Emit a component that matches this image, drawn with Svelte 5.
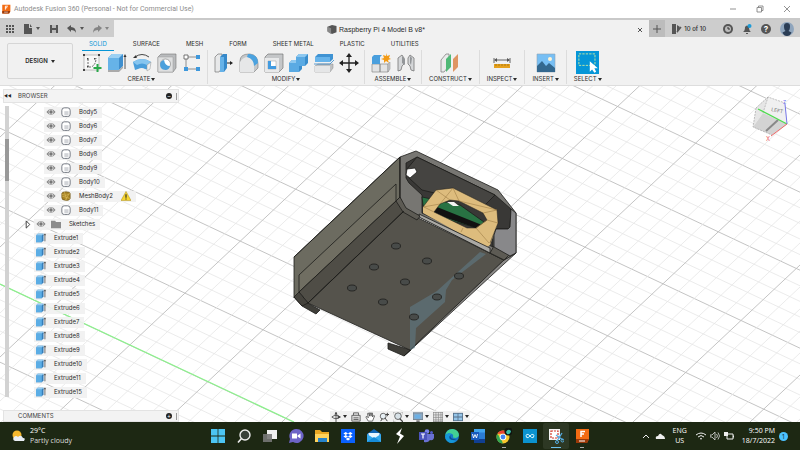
<script lang="ts">
	interface TreeRow {
		label: string;
		kind: 'body' | 'mesh' | 'folder' | 'extrude';
	}

	interface ToolGroup {
		name: string;
		tools: string[];
	}

	const ribbonTabs = ['SOLID', 'SURFACE', 'MESH', 'FORM', 'SHEET METAL', 'PLASTIC', 'UTILITIES'];

	const groups: ToolGroup[] = [
		{ name: 'CREATE', tools: ['sketch', 'extrude', 'revolve', 'hole', 'pattern'] },
		{ name: 'MODIFY', tools: ['presspull', 'fillet', 'shell', 'combine', 'split', 'move'] },
		{ name: 'ASSEMBLE', tools: ['component', 'joint'] },
		{ name: 'CONSTRUCT', tools: ['plane'] },
		{ name: 'INSPECT', tools: ['measure'] },
		{ name: 'INSERT', tools: ['image'] },
		{ name: 'SELECT', tools: ['select'] }
	];

	const rows: TreeRow[] = [
		...[5, 6, 7, 8, 9, 10].map((n) => ({ label: `Body${n}`, kind: 'body' as const })),
		{ label: 'MeshBody2', kind: 'mesh' },
		{ label: 'Body11', kind: 'body' },
		{ label: 'Sketches', kind: 'folder' },
		...[1, 2, 3, 4, 5, 6, 7, 8, 9, 10, 11, 15].map((n) => ({
			label: `Extrude${n}`,
			kind: 'extrude' as const
		}))
	];

	const navTools = [
		{ icon: 'orbit', menu: true },
		{ icon: 'lookat', menu: false },
		{ icon: 'pan', menu: false },
		{ icon: 'zoom', menu: false },
		{ icon: 'fit', menu: true },
		{ icon: 'display', menu: true },
		{ icon: 'grid', menu: true },
		{ icon: 'viewports', menu: true }
	];

	const apps = ['windows', 'search', 'taskview', 'chat', 'explorer', 'dropbox', 'mail', 'scratch', 'teams', 'edge', 'word', 'chrome', 'arduino', 'snip', 'fusion'];

	// 20x20 glyphs for the ribbon
	const toolIcons: Record<string, string> = {
		sketch: '<rect x="2" y="2" width="15" height="15" fill="#f8f8f8" stroke="#999" stroke-width=".6"/><g fill="#444"><path d="M1 1h2v2H1zM16 1h2v2h-2zM1 16h2v2H1zM5 5h1.500v1.500H5zM12 5h1.500v1.500H12zM5 13h1.500v1.500H5z"/></g><path d="M6 6v8h3q5-2 5-9" fill="none" stroke="#444" stroke-width=".8" stroke-dasharray="2 1"/><path d="M15.500 11v8M11.500 15h8" stroke="#2aa84a" stroke-width="2"/>',
		extrude: '<path d="M1 5l4-4h11v12l-4 4H1z" fill="#3f8fce"/><path d="M1 5l4-4h11l-4 4z" fill="#9bd0f3"/><path d="M1 5h11v12H1z" fill="#66b3e8"/><path d="M1 17h11l4-4v2l-4 4H1z" fill="#aaa"/><path d="M18 16V3" stroke="#333" stroke-width=".8"/><path d="M16.500 4L18 1l1.500 3z" fill="#333"/>',
		revolve: '<path d="M3 4q7-5 14 0" fill="none" stroke="#333" stroke-width=".9"/><path d="M1 5l3-3 .8 3z" fill="#333"/><path d="M1 9q9-6 18 0l-2 8-4-1q-3-2-7 0l-3 1z" fill="#4a9edb"/><path d="M1 9q9-6 18 0l-4 3q-5-3-10 0z" fill="#86c5ef"/><path d="M15 12l4-3-1 7-3 2z" fill="#f0f0f0" stroke="#999" stroke-width=".5"/>',
		hole: '<path d="M1 4l3-3h15v14l-3 4H1z" fill="#b9bbbd" stroke="#777" stroke-width=".6"/><path d="M1 4h15v15H1z" fill="#dedfe0" stroke="#999" stroke-width=".5"/><circle cx="8.500" cy="11" r="5" fill="#fff" stroke="#777" stroke-width=".6"/><path d="M7 7a5 5 0 1 0 6 6q-5 0-6-6z" fill="#4ba0dc"/>',
		pattern: '<path d="M6 4h9M4 6v9M6 16h9" fill="none" stroke="#777" stroke-width=".8"/><path d="M2 2h4v4H2z" fill="#fff" stroke="#555" stroke-width=".8"/><path d="M14 2h4v4h-4zM2 14h4v4H2zM14 14h4v4h-4z" fill="#3e98dc"/>',
		presspull: '<path d="M1 4l3-3h4v14l-3 4H1z" fill="#e7e8e9" stroke="#777" stroke-width=".7"/><path d="M6 4l3-3h4v14l-3 4H6z" fill="#3689ca"/><path d="M6 4h4v15H6z" fill="#66b2e8"/><path d="M13 10h4" stroke="#222" stroke-width="1"/><path d="M16 8l3 2-3 2z" fill="#222"/>',
		fillet: '<path d="M1 19V8q0-7 9-7h1q8 1 8 10v4l-4 4z" fill="#c5c7c9" stroke="#777" stroke-width=".6"/><path d="M1 19V9q3-5 8-5 5 1 6 8v7z" fill="#e6e7e8"/><path d="M9 1h2q8 1 8 9l-4 3q0-7-7-9z" fill="#4ba2df"/>',
		shell: '<path d="M1 4l3-3h15v14l-4 4H1z" fill="#c4c6c8" stroke="#777" stroke-width=".7"/><path d="M1 5h14v14H1z" fill="#e8e9ea"/><path d="M4 8h8v8H4z" fill="#fff" stroke="#999" stroke-width=".5"/><path d="M4 8h3v5h5v3H4z" fill="#429be0"/>',
		combine: '<path d="M0 10l3-3h4V4l3-3h9v9l-3 3h-3v3l-3 3H0z" fill="#398dcc"/><path d="M0 10l3-3h4V4l3-3h9l-3 3v6H8z" fill="#8dc8f0"/><path d="M0 10h7V4h9v9h-6v6H0z" fill="#5aaae3"/>',
		split: '<path d="M1 4l3-3h15v5l-3 3H1z" fill="#3f93d3"/><path d="M1 4h15v5H1z" fill="#67b4eb"/><path d="M1 13l3-2h15v4l-3 4H1z" fill="#bfc1c3" stroke="#888" stroke-width=".5"/><path d="M1 13h15v6H1z" fill="#e5e6e7"/><path d="M0 11h16l4-4" fill="none" stroke="#3689ca" stroke-width=".8"/>',
		move: '<path d="M10 3v14M3 10h14" stroke="#222" stroke-width="1.300"/><path d="M10 0l3 4H7zM10 20l3-4H7zM0 10l4-3v6zM20 10l-4-3v6z" fill="#222"/>',
		component: '<path d="M1 11h8v8H1zM9 11h8v8H9z" fill="#e2e3e4" stroke="#888" stroke-width=".7"/><path d="M17 11l2-2v7l-2 3z" fill="#c6c8ca" stroke="#888" stroke-width=".5"/><path d="M1 4l2-2h8l-2 2v7H1z" fill="#4a9fdd"/><path d="M15 0l1 3 3-1-1 3 2 1-3 1 1 3-3-2-2 2 0-3-3-1 3-1-1-3 3 1z" fill="#f39b16"/>',
		joint: '<path d="M2 5l4-3 2 3v6l-2 2-1 4-3 1zM18 5l-4-3-2 3v6l2 2 1 4 3 1z" fill="#d5d7d9" stroke="#777" stroke-width=".8"/><path d="M6 3l3 3v6l-3-2zM14 3l2 2-1 7-1-2z" fill="#939699"/>',
		plane: '<path d="M1 7l5-6h3v12l-5 6H1z" fill="#e9eaea" stroke="#777" stroke-width=".7"/><path d="M6 6l5-5v13l-5 5z" fill="#4fb976"/><path d="M13 6l5-5v13l-5 5z" fill="#df9562"/>',
		measure: '<path d="M2 5v5M18 5v5M3 7h14" stroke="#555" stroke-width=".9"/><path d="M2 7l3-2v4zM18 7l-3-2v4z" fill="#555"/><path d="M2 11h16v4H2z" fill="#e6a11d"/><path d="M4 11v2M7 11v2M10 11v2M13 11v2M16 11v2" stroke="#8a5f08" stroke-width=".6"/>',
		image: '<path d="M1 1h18v18H1z" fill="#77bff4" stroke="#90a6b7" stroke-width=".6"/><circle cx="14" cy="6" r="2" fill="#fff5d5"/><path d="M1 13l5-5 4 5 3-3 6 5v4H1z" fill="#33688f"/>',
		select: '<path d="M0 0h20v20H0z" fill="#0696d7"/><path d="M2.500 2.500h14v10h-14z" fill="none" stroke="#c9e89f" stroke-width=".8" stroke-dasharray="2 1"/><path d="M12 9v9l2-2 2 3 1.500-1-1.500-3h3z" fill="#fff"/>'
	};

	// 12x12 glyphs shared by the tree and the navigation bar
	const smallIcons: Record<string, string> = {
		eye: '<path d="M.500 6Q6-1 11.500 6 6 13 .500 6z" fill="#858585"/><circle cx="6" cy="6" r="3" fill="#ddd"/><circle cx="6" cy="6" r="2" fill="#777"/>',
		body: '<rect x="1" y="1" width="10" height="10.500" rx="3" fill="#fff" stroke="#5f6570" stroke-width="1"/><path d="M4 5h5v5H4z" fill="#d2d4d8"/>',
		mesh: '<path d="M1 3q0-2 5-2 5 0 5 2v6q-1 3-6 2-4 0-4-3z" fill="#a98527" stroke="#6d5518" stroke-width=".8"/><path d="M1 4q5 3 10-1M4 1l3 10M10 3L5 11M1 6l10 3" fill="none" stroke="#e3c566" stroke-width=".6"/>',
		folder: '<path d="M0 2h5l1 1.500h6V11H0z" fill="#8b8b8b"/>',
		extrude: '<path d="M0 3l2-2h7v8l-2 2H0z" fill="#337dba"/><path d="M0 3h7v8H0z" fill="#5bade5"/><path d="M0 3l2-2h7L7 3z" fill="#94cdf3"/><path d="M10.700 10V2M9.500 3l1.200-2L12 3" fill="none" stroke="#444" stroke-width=".9"/>',
		orbit: '<path d="M6 0v12M1 6q5-4 10 0M1 6q5 4 10 0" fill="none" stroke="#444" stroke-width="1"/><path d="M8 4l4 2-4 2zM4 3l2-3 2 3z" fill="#444"/>',
		lookat: '<path d="M1 4h10v7H1zM3 4V1h6v3M3 7h6M3 9h6" fill="#ddd" stroke="#555" stroke-width="1"/>',
		pan: '<path d="M4 11L1 6l1-1 2 2-1-5 1-1 1.500 4V1h1l.8 4L8 1l1 .3L9 6l1.500-2 1 .6L9 11z" fill="#fff" stroke="#444" stroke-width=".9"/>',
		zoom: '<circle cx="5" cy="5" r="3.500" fill="#e8f0f5" stroke="#555"/><path d="M2 11l2-3M7 7l3 4M10 1v4M8 3h4" stroke="#444" stroke-width="1.200"/>',
		fit: '<circle cx="6" cy="5" r="4" fill="#d8e2e8" stroke="#555"/><path d="M8 8l4 4" stroke="#444" stroke-width="1.500"/><path d="M0 3V0h3M9 0h3v3M0 9v3h3" fill="none" stroke="#999" stroke-width=".8"/>',
		display: '<path d="M0 1h12v8H0z" fill="#8ea8c0" stroke="#667788"/><path d="M2 3h7v5H2z" fill="#6cb0e5"/><path d="M4 10h4v2H4z" fill="#777"/>',
		grid: '<path d="M0 0h12v12H0z" fill="#e5e5e5"/><path d="M0 .500h12M0 3.500h12M0 6.500h12M0 9.500h12M.500 0v12M3.500 0v12M6.500 0v12M9.500 0v12M0 11.500h12M11.500 0v12" stroke="#888" stroke-width=".8"/>',
		viewports: '<path d="M0 1h12v10H0z" fill="#56708a"/><path d="M1 2h4.500v3.500H1zM6.500 2H11v3.500H6.500zM1 6.500h4.500V10H1zM6.500 6.500H11V10H6.500z" fill="#94c4e8"/>',
		warn: '<path d="M6 .500L12 11.500H0z" fill="#f7d530" stroke="#a98a13" stroke-width=".6"/><path d="M6 4v4M6 9v1.300" stroke="#222" stroke-width="1.300"/>'
	};

	// 16x16 glyphs for the taskbar
	const appIcons: Record<string, string> = {
		windows: '<path d="M1 1h6.600v6.600H1zM8.400 1H15v6.600H8.400zM1 8.400h6.600V15H1zM8.400 8.400H15V15H8.400z" fill="#4cc5f3"/>',
		search: '<circle cx="9" cy="7" r="5" fill="#39413a" stroke="#eee" stroke-width="1.400"/><path d="M5.500 10.500L2 14.500" stroke="#eee" stroke-width="1.700"/>',
		taskview: '<path d="M5 2h10v9H5z" fill="#f0f0f0"/><path d="M1 6h9v8H1z" fill="#777" opacity=".9"/>',
		chat: '<path d="M8 1a7 7 0 1 1-3 13l-4 1 1-4A7 7 0 0 1 8 1z" fill="#6d64c7"/><path d="M4 5.500h5v5H4zM9.500 7.500l3-2v5l-3-2z" fill="#fff"/>',
		explorer: '<path d="M1 2h5l2 2h7v10H1z" fill="#e8a723"/><path d="M1 6h14v8H1z" fill="#ffd35c"/><path d="M4 10h9v4H4z" fill="#2683cb"/>',
		dropbox: '<path d="M1 1h14v14H1z" fill="#0a61fe"/><path d="M5.700 4L8 5.500 5.700 7 3.400 5.500zM10.300 4l2.300 1.500L10.300 7 8 5.500zM5.700 7L8 8.500 5.700 10 3.400 8.500zM10.300 7l2.300 1.500-2.300 1.500L8 8.500zM8 9.500l2.300 1.500L8 12.500 5.700 11z" fill="#fff"/>',
		mail: '<path d="M1 6l7-5 7 5v8H1z" fill="#1266b5"/><path d="M2.500 5h11v6h-11z" fill="#e9f6ff"/><path d="M1 6l7 4.500L15 6v8H1z" fill="#36a9ec"/><path d="M1 14l7-5 7 5z" fill="#168bd8"/>',
		scratch: '<path d="M10 0L4 6l4 2.500L5 16l7-8-4-2.500z" fill="#fff"/>',
		teams: '<circle cx="9" cy="3.500" r="2.300" fill="#7b83eb"/><circle cx="13.500" cy="4.500" r="1.500" fill="#5059c9"/><path d="M6 6h10v4q-1 3-4 2-2 3-6 2z" fill="#6971d2"/><path d="M1 4h8v8H1z" fill="#4b53bc"/><path d="M3 6h4M5 6v4.500" stroke="#fff" stroke-width="1.200"/>',
		edge: '<circle cx="8" cy="8" r="7" fill="#1678c8"/><path d="M1.200 7Q3 .500 9 1q6 1 6 6.500Q13.500 11 9 9.500q1-4-3-4-3 0-4.800 1.500z" fill="#43cf94"/><path d="M1 8q3-5 6-2-4 5 5 7-5 4-9 0Q1 11 1 8z" fill="#1597d8"/><path d="M6.500 7q-1 4 6 4.500-5 1.500-7-1-1-2 1-3.500z" fill="#0d4d91"/>',
		word: '<path d="M4 1h11v14H4z" fill="#2b7cd3"/><path d="M4 1h11v3.500H4z" fill="#41a5ee"/><path d="M4 11h11v4H4z" fill="#103f91"/><path d="M1 4h8v8H1z" fill="#185abd"/><path d="M2.500 6l1 4L5 6.500 6.500 10l1-4" fill="none" stroke="#fff" stroke-width=".9"/>',
		chrome: '<circle cx="7" cy="9" r="6.500" fill="#f8c72c"/><path d="M1.400 5.700a6.500 6.500 0 0 1 11.200 0H7z" fill="#e94235"/><path d="M1.400 5.700L5 11l2 4.500A6.500 6.500 0 0 1 1.400 5.700z" fill="#34a853"/><circle cx="7" cy="9" r="3.300" fill="#fff"/><circle cx="7" cy="9" r="2.400" fill="#4285f4"/><circle cx="12.500" cy="3.500" r="4" fill="#101510"/><path d="M10 4q2-4 5-1-1 4-4 3z" fill="#38bda5"/>',
		arduino: '<path d="M1 1h14v14H1z" fill="#0b93cf"/><path d="M8 8Q6 5.500 4.700 6.500t0 3Q6 10.500 8 8q2-2.500 3.300-1.500t0 3Q10 10.500 8 8z" fill="none" stroke="#d8f6ff" stroke-width="1"/>',
		snip: '<path d="M1 1h11v11H1z" fill="#f4f4f4"/><path d="M3 3h7v7H3z" fill="#fff" stroke="#d33b2c" stroke-width="1.200" stroke-dasharray="2 1"/><path d="M8 7l7 5M14 5l-5 8" stroke="#55ade2" stroke-width="1.300"/><circle cx="9" cy="14" r="1.500" fill="none" stroke="#55ade2"/><circle cx="14.500" cy="12.500" r="1.500" fill="none" stroke="#55ade2"/>',
		fusion: '<path d="M2 1h13v10l-2 4H2z" fill="#f36b12"/><path d="M2 11h13l-2 4H2z" fill="#9b3908"/><path d="M7 9V3.500h4M7 6h3" fill="none" stroke="#fff" stroke-width="1.500"/><path d="M5 13h6" stroke="#fff" stroke-width="1"/>'
	};

	// ground grid, every fifth line is a major one
	const down = Array.from({ length: 50 }, (_, i) => ({
		y: 409 - i * 15.6,
		major: (i - 3) % 5 === 0
	}));
	const up = Array.from({ length: 50 }, (_, i) => ({
		y: 137 + i * 22,
		major: i % 5 === 0
	}));

	const screwHoles = [
		[396, 246], [427, 261], [374, 267], [405, 282], [459, 276],
		[352, 288], [383, 302], [437, 297], [414, 317]
	];

	let activeTab = $state('SOLID');
	let hidden = $state<Record<string, boolean>>({});
</script>

<div class="app">
	<header class="titlebar">
		<svg class="logo" viewBox="0 0 16 16" aria-hidden="true">{@html appIcons.fusion}</svg>
		<h1>Autodesk Fusion 360 (Personal - Not for Commercial Use)</h1>
		<button aria-label="Minimize"><svg viewBox="0 0 8 8"><path d="M1 4h6" /></svg></button>
		<button aria-label="Restore"><svg viewBox="0 0 8 8"><path d="M1 2.500h4.500V7H1zM2.500 2.500V1H7v4.500H5.500" /></svg></button>
		<button aria-label="Close window"><svg viewBox="0 0 8 8"><path d="M1 1l6 6M7 1L1 7" /></svg></button>
	</header>

	<div class="tabbar">
		<div class="quick">
			<button aria-label="Data panel"><svg viewBox="0 0 10 10"><path d="M1 1h2v2H1zM4 1h2v2H4zM7 1h2v2H7zM1 4h2v2H1zM4 4h2v2H4zM7 4h2v2H7zM1 7h2v2H1zM4 7h2v2H4zM7 7h2v2H7z" /></svg></button>
			<button aria-label="File"><svg viewBox="0 0 10 10"><path d="M1 0h5v4h3v6H1zM7 0l2 3H7z" /></svg><i class="caret"></i></button>
			<button aria-label="Save"><svg viewBox="0 0 10 10"><path d="M1 1h8v8H1z" /><path d="M3 1h4v3H3zM3 6h4v3H3z" fill="#bbb" /></svg></button>
			<button aria-label="Undo"><svg viewBox="0 0 10 10"><path d="M0 4l4-3v2q5 0 5 6-1-3-5-3v2z" /></svg><i class="caret"></i></button>
			<button class="dim" aria-label="Redo"><svg viewBox="0 0 10 10"><path d="M10 4L6 1v2q-5 0-5 6 1-3 5-3v2z" /></svg><i class="caret"></i></button>
		</div>
		<div class="doc">
			<svg viewBox="0 0 10 10" aria-hidden="true"><path d="M0 2l5-2 5 1v7l-5 2-5-3z" fill="#555" /><path d="M0 2l4 1.500V10L0 7.500z" fill="#888" /></svg>
			<span>Raspberry Pi 4 Model B v8*</span>
			<button aria-label="Close document"><svg viewBox="0 0 8 8"><path d="M2 2l4 4M6 2L2 6" /></svg></button>
		</div>
		<button class="new-tab" aria-label="New design"><svg viewBox="0 0 8 8"><path d="M4 0v8M0 4h8" /></svg></button>
		<div class="account">
			<button class="jobs">
				<svg viewBox="0 0 10 10"><path d="M0 0h4v10H0zM5 1l3 2-3 6z" fill="#555" /><path d="M5 8l4-5" stroke="#555" stroke-width="1.500" /></svg>10 of 10
			</button>
			<button aria-label="Recent"><svg viewBox="0 0 10 10"><circle cx="5" cy="5" r="5" fill="#555" /><circle cx="5" cy="5" r="3" fill="#bbb" /><path d="M5 3v2h2" fill="none" stroke="#333" /></svg></button>
			<button aria-label="Notifications"><svg viewBox="0 0 10 10"><path d="M1 8q2-1 2-5 2-3 4 0 0 4 2 5zM4 9h2v1H4z" fill="#555" /><circle cx="7.500" cy="2" r="2" fill="#1a9bd8" /></svg></button>
			<button class="help" aria-label="Help">?</button>
			<button aria-label="Profile" class="avatar"><svg viewBox="0 0 14 14"><circle cx="7" cy="7" r="7" fill="#8fa5bd" /><path d="M4 4q0-3 3-3t3 3q0 4-1.500 5l3 1.500Q10 14 7 14t-4.500-3.500l3-1.500Q4 8 4 4z" fill="#2b3d55" /></svg></button>
		</div>
	</div>

	<div class="ribbon">
		<button class="workspace">DESIGN<i class="caret"></i></button>
		<div class="ribbon-main">
			<nav>
				{#each ribbonTabs as tab (tab)}
					<button class:active={activeTab === tab} onclick={() => (activeTab = tab)}>{tab}</button>
				{/each}
			</nav>
			<div class="groups">
				{#each groups as group (group.name)}
					<section class="group" class:single={group.tools.length === 1}>
						<div class="tools">
							{#each group.tools as tool (tool)}
								<button class="tool {tool}" aria-label={tool}>
									<svg viewBox="0 0 20 20">{@html toolIcons[tool]}</svg>
								</button>
							{/each}
						</div>
						<button class="group-name">{group.name}<i class="caret"></i></button>
					</section>
				{/each}
			</div>
		</div>
	</div>

	<main>
		<svg class="scene" viewBox="0 86 800 336" preserveAspectRatio="xMidYMid slice" aria-label="3D model">
			<g class="ground">
				{#each down as line}
					<path class:major={line.major} d="M0 {line.y}L800 {line.y + 376}" />
				{/each}
				{#each up as line}
					<path class:major={line.major} d="M0 {line.y}L800 {line.y - 752}" />
				{/each}
			</g>
			<path d="M0 284L294 422" stroke="#8cf28c" stroke-width="1.200" />

			<g class="model">
				<path fill="#3f3e39" d="M294 297l8 9 14 8 4-4-14-8zM388 343v6l16 7 7-6z" />
				<path fill="#6c6b60" d="M294 257L400 157v40l-4 4-97 92-5 5z" />
				<path fill="#706e62" d="M299 275l97-91v17l-97 91z" />
				<path fill="#4f4d46" d="M400 197l6 12-98 94-9-11 97-91z" />
				<path fill="#45433d" d="M299 292l9 11-6 3-8-9z" />
				<path fill="#55534c" d="M404 211l100 49-94 90-102-47z" />
				<path fill="#8b8a88" d="M516 253l-112 103 6-6 94-90z" />
				<path fill="#777672" d="M400 157l16-6 82 39 18 23v40l-12 7-14-7-86-44-4-12z" />
				<path fill="#393836" d="M406 163l11-6 78 38 16 14-1 18-2 2h-12l-3 4v14l-71-34v-18l-13-12-3-5z" />
				<path fill="#454441" d="M417 157l78 38-10 10-63-15-13-12-2-9z" />
				<path fill="#fff" d="M407 169l8-1 2 4-7 6-4-3z" />
				<path fill="#287243" d="M422 197l38 8 24 17v8l-60-17z" />
				<path class="bare" fill="#111" d="M432 205l50 20v5l-50-17z" />
				<path class="bare" fill="#f4f4f4" d="M447 202l7 0 5 4-6 0z" />
				<path class="bare" fill="#ddbc7d" fill-rule="evenodd" d="M423 213v-6l13-17 17-2 44 22 1 13-8 22-4 3zM434 212l6-8 10-4 9 1 24 12 4 7-11 8h-9z" />
				<path fill="none" stroke-width=".5" d="M423 207l13-17 17-2 44 22 1 13-8 20M434 212l6-8 10-4 9 1 24 12 4 7-11 8h-9z" />
				<path fill="none" stroke="#93723c" stroke-width=".5" d="M424 207l10 5M436 190l14 10M453 188l6 13 38 9-14 3M498 223l-11-3-11 8 13 15M463 228l-2 4M423 207l17-3 13-16" />
				<path fill="#aaa9a5" d="M419 214l71 34v5l-71-36z" />
				<path fill="#5d5b54" d="M400 197l6 11 14 8-3 4-14-8-7-11zM494 246l16 8-6 6-14-7z" />
				<path fill="#88888a" d="M496 229h12l2-2 1-18 5 4v40l-6 3-16-9v-12z" />
				<path class="bare" fill="#607e8a" opacity=".55" d="M480 252l6 2-34 26-6 10-1 12-29 26-1 20-5 2v-43l27-16z" />
				<path fill="none" d="M294 257L400 157v40M404 211l-96 92" />
				{#each screwHoles as [cx, cy]}
					<ellipse {cx} {cy} rx="4.500" ry="3" fill="#484b49" />
				{/each}
			</g>
		</svg>

		<svg class="viewcube" viewBox="750 95 40 48" aria-label="View cube">
			<path fill="#e6e6e6" d="M756 108l12-11-5 16-10 14z" />
			<path fill="#f0f0f0" d="M768 97l17 6 2 21-24-11z" />
			<path fill="#d3d3d3" d="M763 113l24 11-15 11-19-8z" />
			<path fill="none" stroke="#999" stroke-width=".6" stroke-dasharray="2 1" d="M756 108l12-11 17 6M756 108l-3 19 19 8M763 113l5-16" />
			<path d="M766 131l12-11" stroke="#888" stroke-width="2" />
			<path d="M758 109l29 15" stroke="#4edb4e" stroke-width="1.300" />
			<path d="M787 124l-2-20" stroke="#7777e8" />
			<path d="M787 124l-16 12" stroke="#ee6666" />
			<text x="771" y="111" transform="rotate(12 771 111)">LEFT</text>
			<text x="766" y="141" class="x">X</text>
			<text x="783" y="104" class="z">Z</text>
		</svg>

		<aside>
			<div class="panel-head">
				<span class="rewind">◀◀</span>
				<h2>BROWSER</h2>
				<span class="dot">–</span><i class="grip"></i>
			</div>
			<div class="browser">
				<div class="track"><div class="thumb"></div></div>
				<ul>
					{#each rows as row (row.label)}
						<li class={row.kind}>
							{#if row.kind === 'folder'}
								<button class="expander" aria-label="Expand {row.label}">
									<svg viewBox="0 0 6 10"><path d="M1 1l4 4-4 4z" fill="#fff" stroke="#333" /></svg>
								</button>
							{/if}
							<div class="item">
								{#if row.kind !== 'extrude'}
									<button
										class="eye"
										class:off={hidden[row.label]}
										aria-label="Toggle {row.label}"
										onclick={() => (hidden[row.label] = !hidden[row.label])}
									>
										<svg viewBox="0 0 12 12">{@html smallIcons.eye}</svg>
									</button>
								{/if}
								<svg class="kind" viewBox="0 0 12 12" aria-hidden="true">{@html smallIcons[row.kind]}</svg>
								<span>{row.label}</span>
								{#if row.kind === 'mesh'}
									<svg class="warn" viewBox="0 0 12 12" aria-label="Warning">{@html smallIcons.warn}</svg>
								{/if}
							</div>
						</li>
					{/each}
				</ul>
			</div>
			<div class="panel-head comments">
				<span class="rewind"></span>
				<h2>COMMENTS</h2>
				<span class="dot">+</span><i class="grip"></i>
			</div>
		</aside>

		<div class="navbar">
			{#each navTools as tool (tool.icon)}
				<button aria-label={tool.icon}>
					<svg viewBox="0 0 12 12">{@html smallIcons[tool.icon]}</svg>
					{#if tool.menu}<i class="caret"></i>{/if}
				</button>
			{/each}
		</div>
	</main>

	<footer>
		<button class="weather">
			<svg viewBox="0 0 14 14" aria-hidden="true"><circle cx="6" cy="6" r="4.500" fill="#f5b82e" /><path d="M4 12q-3-1-1-4 2-2 4 0 3-3 5 1 3 0 1 3z" fill="#e9eef5" /></svg>
			<span>29°C<br /><small>Partly cloudy</small></span>
		</button>
		<div class="apps">
			{#each apps as app (app)}
				<button class={app} aria-label={app}><svg viewBox="0 0 16 16">{@html appIcons[app]}</svg></button>
			{/each}
		</div>
		<div class="tray">
			<svg viewBox="0 0 10 10"><path d="M2 7l3-3 3 3" fill="none" stroke="#eee" /></svg>
			<svg viewBox="0 0 10 10"><path d="M1 8q-1-3 2-3 2-4 4-1 3 1 3 4z" fill="#eee" /></svg>
			<span class="lang">ENG<br />US</span>
			<svg viewBox="0 0 10 10"><path d="M0 4q5-4 10 0M2 6q3-3 6 0M4 8q1-1 2 0" fill="none" stroke="#eee" /></svg>
			<svg viewBox="0 0 10 10"><path d="M0 4h2l3-3v8L2 6H0zM6.500 3q2 2 0 4M8 1.500q3 3.500 0 7" fill="none" stroke="#ddd" stroke-width=".8" /></svg>
			<svg viewBox="0 0 10 10"><path d="M3 3h6v5H3zM9.500 4.500v2" fill="none" stroke="#eee" /><path d="M0 1h4v4H0z" fill="#eee" /></svg>
			<span class="clock">9:50 PM<br />18/7/2022</span>
			<span class="badge">1</span>
		</div>
	</footer>
</div>

<style>
	:global(body) {
		margin: 0;
	}

	.app {
		min-height: 100vh;
		display: flex;
		flex-direction: column;
		background: #fff;
		color: #2b2b2b;
		font-family: Inter, 'Liberation Sans', sans-serif;
		font-size: 6px;
		line-height: 8px;
	}

	button {
		border: 0;
		padding: 0;
		background: none;
		color: inherit;
		font: inherit;
		display: flex;
		align-items: center;
		justify-content: center;
		cursor: pointer;
	}

	svg {
		display: block;
		flex-shrink: 0;
	}

	h1,
	h2 {
		margin: 0;
		font-size: inherit;
		font-weight: normal;
	}

	.caret {
		border: 2px solid transparent;
		border-top: 3px solid currentColor;
		border-bottom: 0;
		margin-left: 3px;
	}

	.titlebar {
		height: 18px;
		display: flex;
		align-items: stretch;
	}

	.titlebar .logo {
		width: 10px;
		height: 10px;
		margin: 4px 3px 4px 1px;
	}

	.titlebar h1 {
		flex: 1;
		font-family: Roboto, sans-serif;
		font-size: 7px;
		line-height: 18px;
		color: #8c8c8c;
	}

	.titlebar button {
		width: 27px;
	}

	.titlebar button svg,
	.doc button svg,
	.new-tab svg {
		width: 8px;
		height: 8px;
		fill: none;
		stroke: #777;
		stroke-width: 0.8;
	}

	.tabbar {
		height: 17px;
		display: flex;
		background: #f1f1f1;
		border-top: 2px solid #c9c9c9;
	}

	.quick {
		width: 114px;
		box-sizing: border-box;
		padding: 0 5px;
		display: flex;
		justify-content: space-between;
		background: #cdcdcd;
		color: #555;
	}

	.quick svg {
		width: 10px;
		height: 10px;
		fill: #555;
	}

	.quick .dim {
		opacity: 0.6;
	}

	.doc {
		flex: 1;
		display: flex;
		align-items: center;
		justify-content: center;
		gap: 2px;
		padding: 2px 8px 0 0;
		position: relative;
		font-family: 'Liberation Sans', sans-serif;
		font-size: 7px;
	}

	.doc > svg {
		width: 10px;
		height: 9px;
	}

	.doc button {
		position: absolute;
		right: 2px;
	}

	.new-tab {
		width: 16px;
		margin: 0 0 0 3px;
		background: #bcbcbc;
	}

	.new-tab svg,
	.doc button svg {
		stroke: #555;
		stroke-width: 1;
	}

	.account {
		display: flex;
		align-items: center;
		justify-content: flex-end;
		gap: 9px;
		width: 135px;
		box-sizing: border-box;
		padding-right: 6px;
		background: #cdcdcd;
	}

	.account svg {
		width: 10px;
		height: 10px;
	}

	.jobs {
		gap: 2px;
		margin-right: 8px;
		white-space: nowrap;
		font-weight: 500;
	}

	.help {
		width: 10px;
		height: 10px;
		border-radius: 50%;
		background: #555;
		color: #fff;
		font-weight: bold;
		font-size: 8px;
	}

	.account .avatar svg {
		width: 14px;
		height: 14px;
	}

	.ribbon {
		height: 48px;
		display: flex;
		background: #f1f1f1;
		border-bottom: 1px solid #ddd;
	}

	.workspace {
		width: 66px;
		margin: 6px 3px 6px 7px;
		border: 1px solid #d6d6d6;
		border-radius: 2px;
		font-weight: 600;
	}

	nav {
		display: flex;
		height: 13px;
	}

	nav button {
		position: relative;
		padding: 0 13px;
		white-space: nowrap;
	}

	nav .active {
		color: #0696d7;
	}

	nav .active::after {
		content: '';
		position: absolute;
		left: 6px;
		right: 6px;
		bottom: -1px;
		height: 1px;
		background: #0696d7;
	}

	.groups {
		display: flex;
	}

	.group {
		height: 34px;
		padding: 0 3px;
		border-right: 1px solid #dcdcdc;
		display: flex;
		flex-direction: column;
		align-items: center;
	}

	.group.single {
		padding: 0 7px;
	}

	.group:last-child {
		border-right: 0;
	}

	.tools {
		display: flex;
		height: 25px;
	}

	.tool {
		width: 25px;
	}

	.tool svg {
		width: 20px;
		height: 20px;
	}

	.tool.select svg {
		width: 23px;
		height: 23px;
	}

	.group-name .caret {
		margin-left: 1px;
	}

	main {
		flex: 1;
		display: flex;
		position: relative;
	}

	.scene {
		position: absolute;
		inset: 0;
		width: 100%;
		height: 100%;
	}

	.ground path {
		stroke: #e6e6e6;
		stroke-width: 0.8;
	}

	.ground .major {
		stroke: #bdbdbd;
		stroke-width: 0.9;
	}

	.model {
		stroke: #1d1d1b;
		stroke-width: 0.8;
		stroke-linejoin: round;
	}

	.model .bare {
		stroke: none;
	}

	.viewcube {
		position: absolute;
		right: 10px;
		top: 9px;
		width: 40px;
		height: 48px;
	}

	.viewcube text {
		font-size: 5px;
		fill: #777;
	}

	.viewcube .x {
		font-size: 6px;
		fill: #e66;
	}

	.viewcube .z {
		font-size: 5px;
		fill: #66e;
	}

	aside {
		position: relative;
		width: 176px;
		margin: 3px 0 0 3px;
		display: flex;
		flex-direction: column;
	}

	.panel-head {
		height: 14px;
		box-sizing: border-box;
		display: flex;
		align-items: center;
		background: #f3f3f3;
		border: 1px solid #e3e3e3;
		color: #444;
	}

	.panel-head h2 {
		flex: 1;
	}

	.rewind {
		width: 14px;
		font-size: 4px;
		color: #222;
	}

	.dot {
		width: 6px;
		height: 6px;
		border-radius: 50%;
		background: #222;
		color: #fff;
		line-height: 6px;
		text-align: center;
	}

	.grip {
		width: 1px;
		height: 7px;
		margin: 0 1px 0 4px;
		background: #999;
	}

	.browser {
		flex: 1;
		display: flex;
		padding: 2px 0;
	}

	.track {
		width: 4px;
		margin: 1px 0 11px 2px;
		background: #d2d2d2;
	}

	.thumb {
		width: 4px;
		height: 42px;
		margin-top: 33px;
		background: #999;
	}

	ul {
		margin: 0;
		padding: 0;
		list-style: none;
	}

	li {
		height: 14px;
		display: flex;
		align-items: center;
		padding-left: 35px;
	}

	li.folder {
		padding-left: 13px;
	}

	li.extrude {
		padding-left: 25px;
	}

	.item {
		height: 11px;
		display: flex;
		align-items: center;
		padding: 0 5px 0 2px;
		background: rgba(241, 241, 241, 0.9);
	}

	.item svg {
		width: 10px;
		height: 10px;
	}

	.eye {
		margin-right: 5px;
	}

	.eye.off {
		opacity: 0.3;
	}

	.kind {
		margin-right: 8px;
	}

	.item .warn {
		margin-left: 8px;
	}

	.expander {
		width: 12px;
	}

	.expander svg {
		width: 6px;
		height: 9px;
	}

	.comments {
		height: 12px;
	}

	.navbar {
		position: absolute;
		left: 50%;
		bottom: 0;
		transform: translateX(-50%);
		height: 11px;
		padding: 0 1px;
		display: flex;
		gap: 4px;
		background: #f1f1f1;
	}

	.navbar svg {
		width: 10px;
		height: 10px;
	}

	.navbar .caret {
		margin-left: 2px;
	}

	footer {
		height: 28px;
		display: grid;
		grid-template-columns: 1fr auto 1fr;
		align-items: center;
		background: #1d2813;
		color: #fff;
		font-family: 'Open Sans', 'Noto Sans', sans-serif;
		font-size: 7px;
		line-height: 10px;
	}

	.weather {
		justify-self: start;
		gap: 5px;
		margin-left: 11px;
		text-align: left;
	}

	.weather svg {
		width: 14px;
		height: 14px;
	}

	.weather small {
		font-size: inherit;
		color: #ddd;
	}

	.apps {
		display: flex;
	}

	.apps button {
		width: 26px;
		height: 26px;
		position: relative;
	}

	.apps svg {
		width: 16px;
		height: 16px;
	}

	.apps .snip {
		background: #2d3824;
		border-radius: 2px;
	}

	.apps .chrome::after,
	.apps .snip::after,
	.apps .fusion::after {
		content: '';
		position: absolute;
		bottom: 1px;
		left: 11px;
		right: 11px;
		height: 1px;
		background: #aaa;
	}

	.apps .snip::after {
		left: 8px;
		right: 8px;
		background: #6cc0ee;
	}

	.tray {
		justify-self: end;
		display: flex;
		align-items: center;
		gap: 4px;
		margin-right: 12px;
		white-space: nowrap;
	}

	.tray svg {
		width: 10px;
		height: 10px;
	}

	.lang {
		margin: 0 5px 0 4px;
		text-align: center;
	}

	.clock {
		margin-left: 4px;
		text-align: right;
	}

	.badge {
		width: 9px;
		height: 9px;
		border-radius: 50%;
		background: #4cc2ff;
		color: #123;
		line-height: 9px;
		text-align: center;
	}
</style>
